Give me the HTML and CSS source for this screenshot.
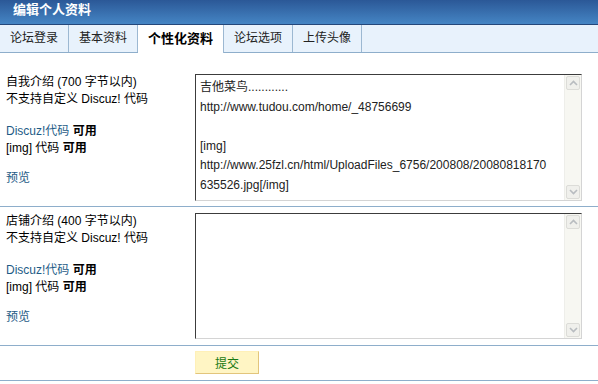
FILE: index.html
```html
<!DOCTYPE html>
<html>
    <head>
        <title>编辑个人资料</title>
        <link rel="stylesheet" href="styles.css">
    </head>
    <body>
        <div class="title">编辑个人资料</div>
        <ul class="tabs">
            <li>论坛登录</li>
            <li>基本资料</li>
            <li class="current">个性化资料</li>
            <li>论坛选项</li>
            <li>上传头像</li>
        </ul>
        <form id="profile">
            <div class="row first">
                <div class="label">
                    <p>自我介绍&nbsp;(700 字节以内)<br>不支持自定义 Discuz! 代码</p>
                    <p><a href="#">Discuz!代码</a> <b>可用</b><br>[img] 代码 <b>可用</b></p>
                    <p><a href="#">预览</a></p>
                </div>
                <div class="box">
                    <div class="text">吉他菜鸟............<br>http://www.tudou.com/home/_48756699<br><br>[img]<br>http://www.25fzl.cn/html/UploadFiles_6756/200808/20080818170<br>635526.jpg[/img]</div>
                    <div class="scroll">
                        <span class="arrow"><svg width="9" height="6" viewBox="0 0 9 6"><path d="M1 5 L4.5 1.5 L8 5" fill="none" stroke="#b8bcc0" stroke-width="1.6"/></svg></span>
                        <span class="arrow"><svg width="9" height="6" viewBox="0 0 9 6"><path d="M1 1 L4.5 4.5 L8 1" fill="none" stroke="#b8bcc0" stroke-width="1.6"/></svg></span>
                    </div>
                </div>
            </div>
            <div class="row second">
                <div class="label">
                    <p>店铺介绍&nbsp;(400 字节以内)<br>不支持自定义 Discuz! 代码</p>
                    <p><a href="#">Discuz!代码</a> <b>可用</b><br>[img] 代码 <b>可用</b></p>
                    <p><a href="#">预览</a></p>
                </div>
                <div class="box">
                    <div class="text"></div>
                    <div class="scroll">
                        <span class="arrow"><svg width="9" height="6" viewBox="0 0 9 6"><path d="M1 5 L4.5 1.5 L8 5" fill="none" stroke="#b8bcc0" stroke-width="1.6"/></svg></span>
                        <span class="arrow"><svg width="9" height="6" viewBox="0 0 9 6"><path d="M1 1 L4.5 4.5 L8 1" fill="none" stroke="#b8bcc0" stroke-width="1.6"/></svg></span>
                    </div>
                </div>
            </div>
            <div class="row submit">
                <div class="label"></div>
                <button type="button" class="button">提交</button>
            </div>
        </form>
    </body>
</html>
```

FILE: styles.css
```css
body{margin:0px; padding:0px; font-family:"Liberation Sans","Noto Sans CJK SC",sans-serif; font-size:12px; color:#000; background:#fff;}
.title{height:24px; line-height:20px; padding-left:13px; color:#fff; font-weight:bold; font-size:13px; background:linear-gradient(#2b5897,#4585c4); border-bottom:1px solid #24477a;}
.tabs{list-style:none; margin:0px; padding:0px; display:flex; height:27px; background:#e8f2fc; border-bottom:1px solid #8eaecb;}
.tabs li{padding:0 10px; line-height:27px; color:#222; border-right:1px solid #9cb8d2;}
.tabs li.current{background:#fff; font-weight:bold; font-size:13px; padding:0 10px; height:28px; color:#000;}
.row{display:flex; align-items:flex-start; border-bottom:1px solid #8eaecb;}
.row.first{padding:21px 0 5px 0;}
.row.second{padding:6px 0 6px 0;}
.row.submit{padding:5px 0 6px 0;}
.label{width:189px; padding-left:6px; line-height:16.5px; flex:none;}
.label p{margin:0 0 16px 0;}
.label p:nth-child(2){margin-bottom:14px;}
.label p:last-child{margin:0;}
.label a{color:#1e5b86; text-decoration:none;}
.box{display:flex; width:385px; border:1px solid #d4d4d4; border-top-color:#3c3c3c; border-left-color:#3c3c3c;}
.row.first .box{height:125px;}
.row.second .box{height:124px;}
.text{flex:1; padding:3px 4px; line-height:19.5px; color:#222; white-space:nowrap; overflow:hidden;}
.scroll{width:16px; display:flex; flex-direction:column; justify-content:space-between; background:#f7f7f2; border-left:1px solid #eeeeea; padding:1px 0;}
.arrow{width:14px; height:14px; margin:0 1px; display:flex; align-items:center; justify-content:center; border:1px solid #dcdcd8; border-radius:2px; background:#f0f0ec; box-sizing:border-box;}
.button{width:64px; height:23px; padding:0px; font-family:inherit; font-size:12px; color:#1a7a12; background:#fff5c4; border:1px solid #fff0b8; border-right-color:#e2c57c; border-bottom-color:#e2c57c;}
```
